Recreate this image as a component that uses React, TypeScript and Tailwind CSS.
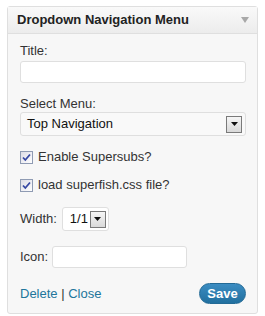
import React from 'react';

const DropButton = () => (
    <span className="flex h-[17px] w-[16px] items-center justify-center border border-[#7a7a7a] bg-gradient-to-b from-[#f6f6f6] to-[#d9d9d9]">
        <svg width="7" height="4" viewBox="0 0 7 4">
            <path d="M0 0h7L3.5 4z" fill="#111" />
        </svg>
    </span>
);

const Check = () => (
    <span className="flex h-[13px] w-[13px] items-center justify-center border border-[#8f9bb3] bg-gradient-to-br from-[#dcdce6] to-[#ffffff]">
        <svg width="9" height="9" viewBox="0 0 9 9">
            <path d="M1 4.5l2.3 2.5L8 1.5" fill="none" stroke="#3547a3" strokeWidth="1.8" />
        </svg>
    </span>
);

export default function App() {
    return (
        <div className="min-h-[316px] bg-white pl-[7px] pt-[6px] text-[13px] text-[#333]" style={{ fontFamily: '"Liberation Sans", Arial, sans-serif' }}>
            <div className="w-[251px] rounded-[3px] border border-[#dfdfdf] bg-[#f7f7f7]">
                {/* header */}
                <div className="flex h-[27px] items-center justify-between border-b border-[#dfdfdf] bg-gradient-to-b from-[#f9f9f9] to-[#ececec] pl-[9px] pr-[8px]">
                    <span className="font-bold text-[#222]">Dropdown Navigation Menu</span>
                    <svg width="8" height="6" viewBox="0 0 8 6">
                        <path d="M0 0h8L4 6z" fill="#a8a8a8" />
                    </svg>
                </div>

                <div className="pl-[12px] pr-[11px] pt-[9px] pb-[9px]">
                    <div className="leading-[16px]">Title:</div>
                    <div className="mt-[2px] h-[22px] rounded-[3px] border border-[#dfdfdf] bg-white" />

                    <div className="mt-[13px] leading-[16px]">Select Menu:</div>
                    <div className="flex h-[24px] items-center justify-between rounded-[3px] border border-[#dfdfdf] bg-[#f9f9f9] pl-[6px] pr-[3px]">
                        <span className="text-[#111]">Top Navigation</span>
                        <DropButton />
                    </div>

                    <label className="mt-[13px] flex h-[16px] items-center gap-[5px]">
                        <Check />
                        <span>Enable Supersubs?</span>
                    </label>
                    <label className="mt-[12px] flex h-[16px] items-center gap-[5px]">
                        <Check />
                        <span>load superfish.css file?</span>
                    </label>

                    <div className="mt-[14px] flex items-center gap-[5px]">
                        <span>Width:</span>
                        <div className="flex h-[24px] w-[47px] items-center justify-between rounded-[3px] border border-[#dfdfdf] bg-white pl-[7px] pr-[2px]">
                            <span className="text-[#111]">1/1</span>
                            <DropButton />
                        </div>
                    </div>

                    <div className="mt-[15px] flex items-center gap-[4px]">
                        <span>Icon:</span>
                        <div className="h-[22px] w-[135px] rounded-[3px] border border-[#dfdfdf] bg-white" />
                    </div>

                    <div className="mt-[15px] flex items-center justify-between">
                        <div className="text-[#21759b]">
                            <span>Delete</span>
                            <span className="text-[#333]"> | </span>
                            <span>Close</span>
                        </div>
                        <button className="h-[21px] w-[47px] rounded-full border border-[#236a96] bg-gradient-to-b from-[#3b8cc2] to-[#21709f] font-bold text-white">
                            Save
                        </button>
                    </div>
                </div>
            </div>
        </div>
    );
}
